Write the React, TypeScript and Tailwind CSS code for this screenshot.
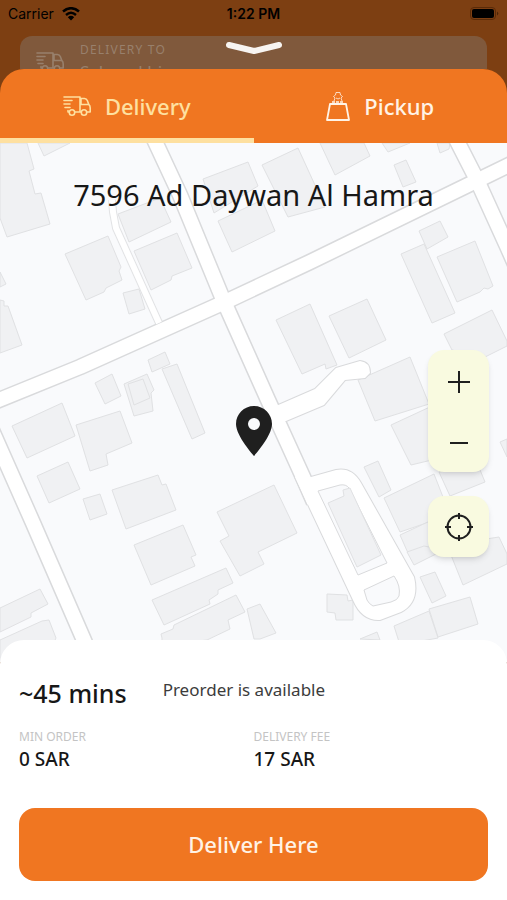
import React from "react";

const buildings = [
  // upper left block
  "0,143 27,143 34,169 29,171 35,194 41,193 50,224 7,237 0,218",
  "38,143 70,143 44,156",
  "65,254 108,236 121,267 119,271 122,280 106,288 104,292 86,300",
  "118,214 160,198 171,222 129,242",
  "134,251 177,233 192,268 172,276 171,280 151,290",
  "123,293 139,289 145,309 129,314",
  "0,272 6,284 0,287",
  "0,300 4,301 4,306 8,306 22,345 0,353",
  "203,179 248,162 258,186 214,213",
  "218,221 262,200 275,231 232,252",
  // upper right block
  "262,165 298,148 325,207 288,217",
  "320,143 364,143 370,156 335,175",
  "382,143 410,143 388,152",
  "394,165 406,160 416,182 403,187",
  "437,143 450,143 449,149 440,153",
  "419,231 440,221 448,237 427,249",
  "401,254 424,244 455,313 432,323",
  "437,257 475,241 493,286 488,289 484,288 480,292 457,302",
  "444,334 492,310 507,341 507,346 485,357 452,350",
  "276,320 310,304 337,365 326,369 325,364 302,374",
  "329,316 367,299 386,340 349,358",
  "358,380 410,357 429,404 375,421",
  // middle left block
  "95,383 112,374 121,396 105,404",
  "124,384 147,374 154,390 151,393 153,411 134,416",
  "128,384 143,379 150,398 134,405",
  "148,360 165,352 170,364 152,372",
  "162,369 177,364 205,433 192,439",
  "12,426 62,403 75,436 27,458",
  "76,425 120,411 132,443 106,454 108,465 90,471",
  "37,476 68,462 80,489 49,503",
  "83,499 100,494 107,514 90,520",
  "112,490 158,475 162,485 166,484 176,510 126,529",
  "134,545 183,525 196,555 191,557 195,566 151,585",
  "152,600 226,568 233,583 218,590 218,594 209,600 210,604 164,625",
  "162,638 161,634 173,629 174,625 236,595 245,612 228,620 230,629 207,640 162,645",
  "217,512 274,485 297,533 258,552 264,564 240,576 220,541 229,536",
  "0,608 40,589 48,604 31,613 31,617 0,632",
  "0,640 42,621 49,620 56,638 45,662 0,662",
  "247,609 260,604 276,633 260,639 254,639",
  // lower right block
  "391,425 432,406 440,458 411,465",
  "364,467 378,461 391,490 379,497",
  "384,498 434,474 450,515 400,532",
  "439,472 478,465 485,482 450,496",
  "400,535 430,521 444,550 408,553",
  "407,552 424,546 444,550 414,565",
  "447,545 499,537 507,554 507,564 463,585",
  "420,577 435,572 446,596 432,603",
  "429,609 470,597 478,624 438,637",
  "394,626 429,611 438,638 400,645",
  "327,594 347,595 348,601 353,600 353,620 336,620 335,613 327,612",
  "360,639 377,632 380,640",
  "500,442 507,439 507,457",
];

const roads = [
  "M-6,402 L80,367 L158,332 L225,302 L310,262 L466,186 L513,163",
  "M153,137 L180,195 L222,297 L268,400 L303,477 L314,502",
  "M455,137 L477,180 L507,246 L515,264",
  "M-10,426 L33,523 L83,638 L94,664",
];

const lane = "M112,200 L113,212 L116,228 L159,323";

// dead-end street right of the main road, and the loop further down
const streets = [
  "M276,406 L315,389 L336,368 L360,361 Q370,362 370,373 L365,378 L345,380 L324,405 L286,421 L278,421 Z",
  "M295,477 L353,600 Q362,621 380,620 L401,612 Q420,602 414,577 L361,483 Q352,467 336,470 L311,477 Z",
];

function MapArt() {
  return (
    <svg
      aria-hidden="true"
      className="absolute inset-0 size-full"
      viewBox="0 143 507 519"
      preserveAspectRatio="xMidYMid slice"
      fill="none"
    >
      <rect y="143" width="507" height="519" fill="#f9fafc" />
      <g fill="#f0f1f3" stroke="#e0e1e3" strokeWidth="1">
        {buildings.map((points) => (
          <polygon key={points} points={points} />
        ))}
      </g>

      {/* road edges, then their white surfaces, so that crossings stay open */}
      <g stroke="#d9dadc" strokeLinejoin="round">
        <path d={lane} strokeWidth="8" stroke="#e2e3e5" />
        {roads.map((d) => (
          <path key={d} d={d} strokeWidth="17" />
        ))}
        {streets.map((d) => (
          <path key={d} d={d} strokeWidth="2" />
        ))}
      </g>
      <g stroke="#ffffff" strokeLinejoin="round">
        <path d={lane} strokeWidth="6" />
        {roads.map((d) => (
          <path key={d} d={d} strokeWidth="14" />
        ))}
      </g>
      <g fill="#ffffff">
        {streets.map((d) => (
          <path key={d} d={d} />
        ))}
      </g>

      {/* blocks enclosed by the loop */}
      <g fill="#f9fafc" stroke="#d9dadc">
        <path d="M318,491 L340,485 Q346,484 349,488 L387,563 L358,575 Z" />
        <path d="M364,590 L394,576 Q401,586 399,596 Q398,600 391,602 L373,606 Q369,604 367,600 Z" />
      </g>
      <polygon
        points="328,503 344,496 343,490 350,488 381,555 357,567"
        fill="#f0f1f3"
        stroke="#e0e1e3"
      />
    </svg>
  );
}

function TruckIcon() {
  return (
    <svg
      aria-hidden="true"
      className="h-5 w-7 shrink-0"
      viewBox="0 0 28 20"
      fill="none"
      stroke="currentColor"
      strokeWidth="1.6"
      strokeLinecap="round"
      strokeLinejoin="round"
    >
      <path d="M1 1H17V16H12M1 4.500H9M1 8H7M2 11.500H7M5 14.500V16H6M17 16H18M17 2.500H21.500Q23.500 2.500 24.300 4.500L25.800 8.500Q27.200 9.500 27.200 12V16H24M18 3V8.500H25.500" />
      <circle cx="9" cy="16.500" r="2.700" />
      <circle cx="21" cy="16.500" r="2.700" />
    </svg>
  );
}

function BagIcon() {
  return (
    <svg
      aria-hidden="true"
      className="h-8 w-6 shrink-0"
      viewBox="0 0 24 32"
      fill="none"
      stroke="currentColor"
      strokeLinejoin="round"
    >
      <path d="M4 14H20L23 30H1Z" strokeWidth="1.800" />
      <path d="M6 12H18" strokeWidth="1.500" strokeDasharray="3 1" />
      <path
        d="M8 11L9 8L7.500 6.500L9.500 5L10 2.500H14L14.500 5L16.500 6.500L15 8L16 11M10 8Q12 10 14 8"
        strokeWidth="1"
        opacity="0.8"
      />
    </svg>
  );
}

function StatusBar() {
  return (
    <div className="grid h-7 grid-cols-3 items-center px-2 font-['Inter',sans-serif] text-sm text-black">
      <div className="flex items-center gap-2">
        <span>Carrier</span>
        <svg aria-hidden="true" className="h-3.5 w-[18px]" viewBox="0 0 18 14" fill="none" stroke="currentColor">
          <path d="M1 4.500Q9 -2 17 4.500" strokeWidth="2.600" />
          <path d="M4 8Q9 3.600 14 8" strokeWidth="2.400" />
          <path d="M9 13.500L5.800 10.200Q9 7.400 12.200 10.200Z" fill="currentColor" stroke="none" />
        </svg>
      </div>
      <span className="text-center font-semibold">1:22 PM</span>
      <svg aria-hidden="true" className="h-3.5 w-[29px] justify-self-end" viewBox="0 0 29 14">
        <rect x="0.500" y="0.500" width="25" height="12" rx="3.500" fill="none" stroke="#5a2b08" />
        <rect x="2" y="2" width="22" height="9" rx="2" fill="#000" />
        <path d="M27 4.500Q29.500 6.500 27 8.500Z" fill="#4a2408" />
      </svg>
    </div>
  );
}

const tab = "flex flex-1 items-center justify-center gap-3.5 text-[22px] leading-8 font-medium";

export default function App() {
  return (
    <div className="flex min-h-screen flex-col bg-[#7d3f12] font-['Noto_Sans',sans-serif] text-[#171717]">
      <header className="h-[69px] overflow-hidden">
        <StatusBar />
        <div className="relative mx-5 mt-2 flex h-20 items-start gap-4 rounded-xl bg-[#80593c] px-4 pt-1 text-[#98806c]">
          <div className="pt-3">
            <TruckIcon />
          </div>
          <div>
            <p className="text-xs leading-5 tracking-widest">DELIVERY TO</p>
            <p className="text-[17px] leading-6">Salamakhi</p>
          </div>
          <button
            type="button"
            aria-label="Close"
            className="absolute top-1 left-1/2 -translate-x-1/2 text-[#f7f4f1]"
          >
            <svg
              aria-hidden="true"
              className="h-4 w-[58px]"
              viewBox="0 0 58 16"
              fill="none"
              stroke="currentColor"
              strokeWidth="6"
              strokeLinecap="round"
              strokeLinejoin="round"
            >
              <path d="M4 5L29 11L54 5" />
            </svg>
          </button>
        </div>
      </header>

      <main className="flex flex-1 flex-col">
        <div role="tablist" className="flex h-[74px] overflow-hidden rounded-t-3xl bg-[#f07621]">
          <button
            type="button"
            role="tab"
            aria-selected="true"
            className={`${tab} text-[#fee0a0] shadow-[inset_0_-5px_0_#fee0a0]`}
          >
            <TruckIcon />
            Delivery
          </button>
          <button type="button" role="tab" aria-selected="false" className={`${tab} text-[#fff3e6]`}>
            <BagIcon />
            Pickup
          </button>
        </div>

        <section aria-label="Map" className="relative flex flex-1 flex-col bg-[#f9fafc] px-[18px] pb-[105px]">
          <MapArt />
          <h1 className="relative pt-8 text-center text-[29px] leading-10">7596 Ad Daywan Al Hamra</h1>

          <svg
            aria-label="Selected location"
            className="absolute top-[263px] left-1/2 h-[50px] w-9 -translate-x-1/2"
            viewBox="0 0 36 50"
            fill="#1f1f1f"
          >
            <path
              fillRule="evenodd"
              d="M18 0C8 0 0 8 0 18C0 30 18 50 18 50C18 50 36 30 36 18C36 8 28 0 18 0ZM18 12A6 6 0 1 1 18 24A6 6 0 1 1 18 12Z"
            />
          </svg>

          <div className="relative mt-auto flex flex-col items-end gap-6">
            <div className="flex h-[122px] w-[61px] flex-col rounded-2xl bg-[#f9fae0] shadow-md">
              <button type="button" aria-label="Zoom in" className="flex flex-1 items-center justify-center">
                <svg aria-hidden="true" className="size-6" viewBox="0 0 24 24" stroke="#1f1f1f" strokeWidth="2">
                  <path d="M1 13H23M12 2V24" />
                </svg>
              </button>
              <button type="button" aria-label="Zoom out" className="flex flex-1 items-center justify-center">
                <svg aria-hidden="true" className="size-6" viewBox="0 0 24 24" stroke="#1f1f1f" strokeWidth="2">
                  <path d="M3 13H21" />
                </svg>
              </button>
            </div>
            <button
              type="button"
              aria-label="Use my location"
              className="flex size-[61px] items-center justify-center rounded-2xl bg-[#f9fae0] shadow-md"
            >
              <svg aria-hidden="true" className="size-7" viewBox="0 0 28 28" fill="none" stroke="#1f1f1f" strokeWidth="2">
                <circle cx="14" cy="14" r="11.500" />
                <path d="M14 0V6M14 22V28M0 14H6M22 14H28" />
              </svg>
            </button>
          </div>
        </section>

        <section
          aria-label="Delivery details"
          className="relative -mt-[22px] rounded-t-3xl bg-white px-[19px] pt-[35px] pb-[19px]"
        >
          <div className="flex items-center gap-9">
            <p className="text-[25px] leading-9 font-medium">~45 mins</p>
            <p className="pb-1.5 text-[17px] leading-6 text-[#3c3c3c]">Preorder is available</p>
          </div>
          <dl className="mt-4 grid grid-cols-2">
            <div>
              <dt className="text-xs leading-5 text-[#c4c4c4]">MIN ORDER</dt>
              <dd className="text-[19px] leading-6 font-medium">0 SAR</dd>
            </div>
            <div>
              <dt className="text-xs leading-5 text-[#c4c4c4]">DELIVERY FEE</dt>
              <dd className="text-[19px] leading-6 font-medium">17 SAR</dd>
            </div>
          </dl>
          <button
            type="button"
            className="mt-[37px] h-[73px] w-full rounded-2xl bg-[#f07621] pb-0.5 text-[22px] leading-8 font-medium text-[#fff3e6]"
          >
            Deliver Here
          </button>
        </section>
      </main>
    </div>
  );
}
